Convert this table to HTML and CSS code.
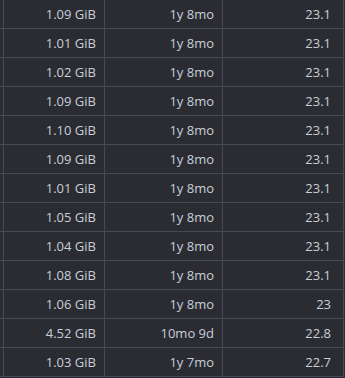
FILE: index.html
```html
<!DOCTYPE html>
<html lang="en">
<head>
  <meta charset="UTF-8" />
  <title>Models</title>
  <link rel="stylesheet" href="styles.css">
</head>
<body>
  <table class="grid">
    <colgroup>
      <col class="col-edge">
      <col class="col-size">
      <col class="col-age">
      <col class="col-score">
    </colgroup>
    <tbody id="rows"></tbody>
  </table>

  <script>
    const rows = [
      ['1.09 GiB', '1y 8mo', '23.1'],
      ['1.01 GiB', '1y 8mo', '23.1'],
      ['1.02 GiB', '1y 8mo', '23.1'],
      ['1.09 GiB', '1y 8mo', '23.1'],
      ['1.10 GiB', '1y 8mo', '23.1'],
      ['1.09 GiB', '1y 8mo', '23.1'],
      ['1.01 GiB', '1y 8mo', '23.1'],
      ['1.05 GiB', '1y 8mo', '23.1'],
      ['1.04 GiB', '1y 8mo', '23.1'],
      ['1.08 GiB', '1y 8mo', '23.1'],
      ['1.06 GiB', '1y 8mo', '23'],
      ['4.52 GiB', '10mo 9d', '22.8'],
      ['1.03 GiB', '1y 7mo', '22.7']
    ];
    document.getElementById('rows').innerHTML = rows.map(r => `
      <tr>
        <td class="edge"></td>
        <td>${r[0]}</td>
        <td>${r[1]}</td>
        <td class="score">${r[2]}</td>
      </tr>`).join('');
  </script>
</body>
</html>
```

FILE: styles.css
```css
html, body {
  background: #2b2c32;
  margin: 0;
}
body {
  color: #c6cfdb;
  font-family: 'Open Sans', 'Noto Sans', sans-serif;
  font-size: 13px;
  overflow: hidden;
}
.grid {
  border-collapse: separate;
  border-spacing: 0;
  table-layout: fixed;
  width: 344px;
}
.col-edge { width: 4px; }
.col-size { width: 101px; }
.col-age { width: 118px; }
.col-score { width: 121px; }
.grid td {
  box-sizing: border-box;
  height: 29px;
  padding: 0 8px 1px 0;
  text-align: right;
  white-space: nowrap;
  border-right: 1px solid #474a56;
  border-bottom: 1px solid #474a56;
}
.grid td.edge {
  padding: 0;
}
.grid td.score {
  padding-right: 12px;
}
```
